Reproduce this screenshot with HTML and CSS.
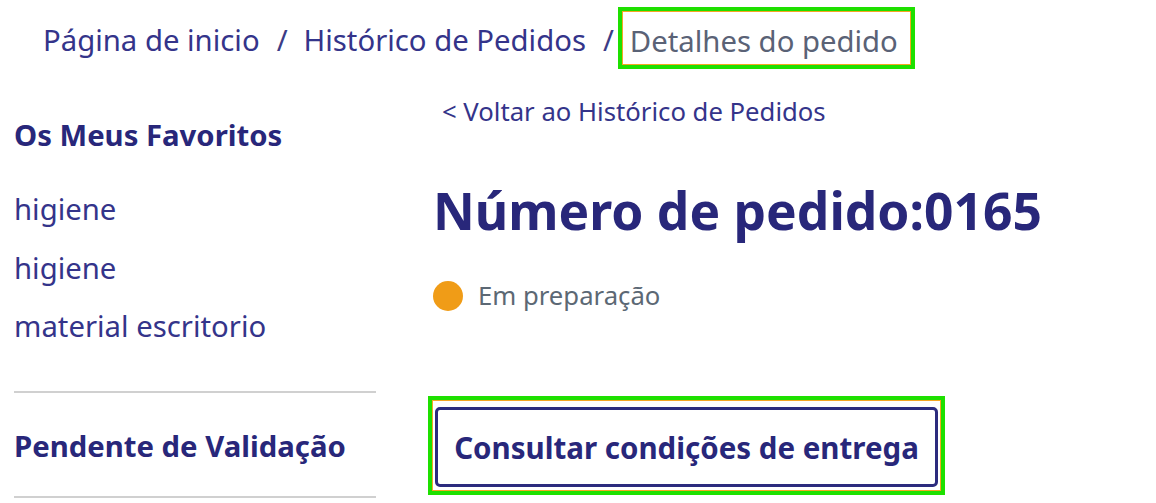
FILE: index.html
```html
<!DOCTYPE html>
<html lang="pt">
<head>
<meta charset="utf-8">
<title>Detalhes do pedido</title>
<link rel="stylesheet" href="styles.css">
</head>
<body>
<nav class="breadcrumb">
  <a class="crumb" href="#">Página de inicio</a>
  <span class="sep">/</span>
  <a class="crumb" href="#">Histórico de Pedidos</a>
  <span class="sep">/</span>
  <span class="crumb current">Detalhes do pedido</span>
</nav>
<div class="layout">
  <aside class="sidebar">
    <h2 class="side-title">Os Meus Favoritos</h2>
    <ul class="fav-list">
      <li><a href="#">higiene</a></li>
      <li><a href="#">higiene</a></li>
      <li><a href="#">material escritorio</a></li>
    </ul>
    <div class="side-section">
      <h2 class="side-title">Pendente de Validação</h2>
    </div>
  </aside>
  <main class="main">
    <a class="back" href="#">&lt; Voltar ao Histórico de Pedidos</a>
    <h1 class="order-title">Número de pedido:0165</h1>
    <div class="status"><span class="dot"></span><span class="status-text">Em preparação</span></div>
    <div class="focus-ring">
      <button class="btn" type="button">Consultar condições de entrega</button>
    </div>
  </main>
</div>
</body>
</html>
```
FILE: styles.css
```css
* { box-sizing: border-box; }
html, body { margin: 0; padding: 0; background: #fff; }
body {
  font-family: "Noto Sans", "Open Sans", sans-serif;
  color: #2c2b7e;
  width: 1156px;
  height: 503px;
  overflow: hidden;
}
a { text-decoration: none; color: inherit; }

.breadcrumb {
  display: flex;
  align-items: center;
  padding: 7px 0 0 43px;
  height: 69px;
  margin-bottom: 7px;
  font-size: 29.3px;
  line-height: 40px;
  color: #34348a;
}
.breadcrumb .crumb,
.breadcrumb .sep {
  padding-top: 4px;
}
.breadcrumb .sep {
  margin: 0 16px 0 17px;
  color: #3c3c86;
}
.breadcrumb .current {
  color: #5a6276;
  margin-left: -12px;
  padding: 5px 13px 0 8px;
  height: 62px;
  display: flex;
  align-items: center;
  border: 4px solid #1ee000;
  box-shadow: inset 0 0 0 1px #f5a623;
}

.layout {
  display: flex;
}
.sidebar {
  width: 362px;
  margin-left: 14px;
  flex: none;
}
.side-title {
  margin: 0;
  font-size: 29.3px;
  line-height: 40px;
  font-weight: 700;
  color: #28277a;
}
.sidebar > .side-title { margin-top: 39px; }
.fav-list {
  list-style: none;
  margin: 34px 0 0;
  padding: 0;
  font-size: 29.3px;
  color: #34348a;
}
.fav-list li { height: 58.5px; line-height: 40px; }
.side-section {
  margin-top: 26.5px;
  border-top: 2px solid #d0d0d0;
  border-bottom: 2px solid #d0d0d0;
  padding: 33px 0 30px;
}

.main {
  margin-left: 57px;
  display: flex;
  flex-direction: column;
  align-items: flex-start;
}
.back {
  margin: 19px 0 0 9px;
  font-size: 25.7px;
  line-height: 34px;
  color: #34348a;
}
.order-title {
  margin: 50px 0 0;
  font-size: 51.5px;
  font-weight: 700;
  color: #28277a;
  line-height: 62px;
}
.status {
  display: flex;
  align-items: center;
  margin-top: 38px;
  font-size: 25.7px;
  line-height: 34px;
  color: #5c6874;
}
.dot {
  width: 30px;
  height: 30px;
  border-radius: 50%;
  background: #f09c17;
  margin-right: 15px;
}
.focus-ring {
  margin: 83px 0 0 -5px;
  border: 4px solid #1ee000;
  box-shadow: inset 0 0 0 1px #f5a623;
  padding: 7px 3px 4px 3px;
}
.btn {
  display: block;
  font-family: inherit;
  font-size: 29.5px;
  font-weight: 700;
  color: #28277a;
  background: #fff;
  border: 3px solid #2c2b7e;
  border-radius: 5px;
  padding: 0;
  height: 80px;
  width: 503px;
  cursor: pointer;
}
```
